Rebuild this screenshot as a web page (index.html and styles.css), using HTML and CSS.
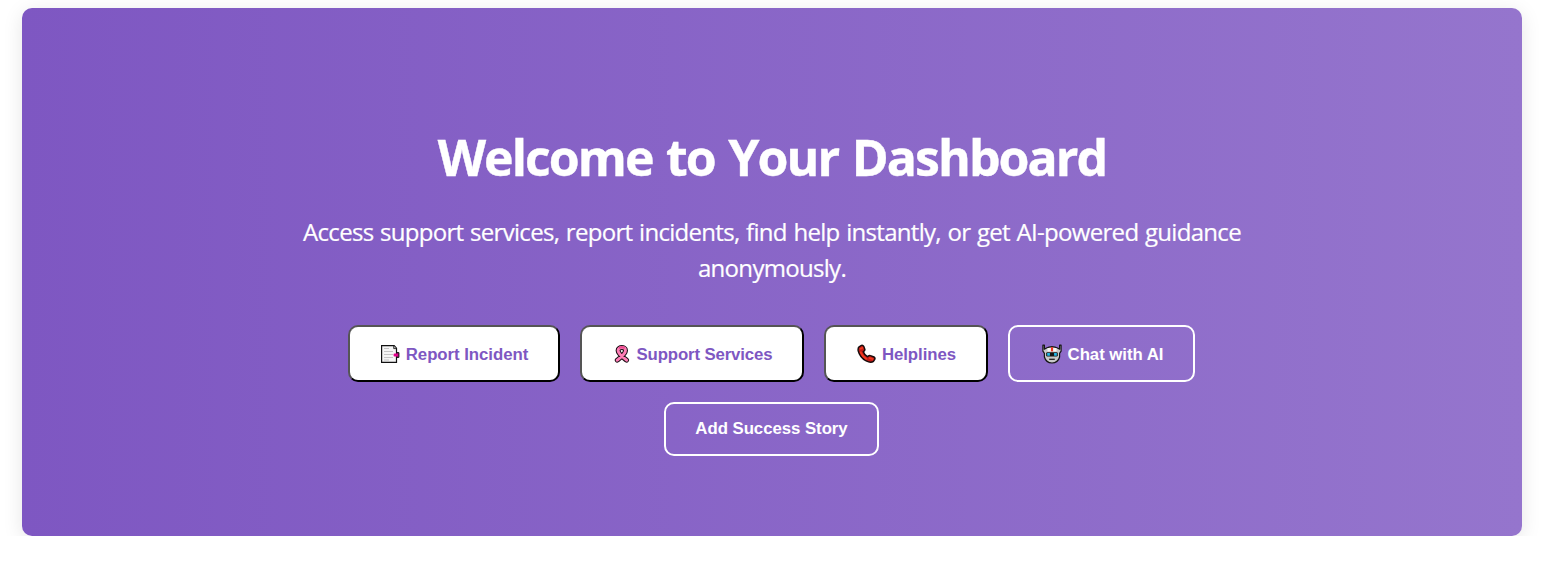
FILE: index.html
```html
<!DOCTYPE html>
<html lang="en">
<head>
<meta charset="utf-8">
<title>Dashboard</title>
<link rel="stylesheet" href="styles.css">
</head>
<body>
<section class="hero">
  <h1 class="title">Welcome to Your Dashboard</h1>
  <p class="lead">Access support services, report incidents, find help instantly, or get AI-powered guidance<br>anonymously.</p>
  <div class="actions">
    <button class="btn solid report">
      <svg class="icon" viewBox="0 0 20 20"><path d="M1.6 1.6H14.2l2.3 2.6V18.4H1.6Z" fill="#f5f5f5" stroke="#111" stroke-width="1.2"/><path d="M13.7 2v2.6h2.7" fill="#bbb" stroke="#111" stroke-width=".8"/><path d="M4 4.5h5M4 7.5h9M4 10.5h9M4 13.5h9M4 16h5" stroke="#c4c4c4" stroke-width="1"/><path d="M16.8 8.6h2.1v4.8h-2.1Z" fill="#b30070" stroke="#111" stroke-width="1"/><rect x="13.6" y="9.6" width="4.4" height="2.8" rx=".9" fill="#e3008c"/></svg>
      <span>Report Incident</span>
    </button>
    <button class="btn solid support">
      <svg class="icon" viewBox="-.5 0 20 20"><path d="M5.7 16.2C8 14.2 14 10 14 6.4 14 2.6 6.6 2.6 6.6 6.4c0 3.6 6.2 7.8 8.5 9.8" fill="none" stroke="#1b1015" stroke-width="5" stroke-linecap="round"/><path d="M5.7 16.2C8 14.2 14 10 14 6.4 14 2.6 6.6 2.6 6.6 6.4c0 3.6 6.2 7.8 8.5 9.8" fill="none" stroke="#ff7eb6" stroke-width="2.9" stroke-linecap="round"/><path d="M7.4 4.2C9 3 11.6 3 13.2 4.2" fill="none" stroke="#ed4c91" stroke-width="2"/></svg>
      <span>Support Services</span>
    </button>
    <button class="btn solid help">
      <svg class="icon" viewBox="-1 0 20 20"><path d="M2.1 2.8 4.4 1.4Q5.9 .9 6.7 2.4L7.8 5.2Q8.1 6.3 7 7.1L6.3 7.8Q7.3 10.8 10.4 12.7L11.6 11.8Q12.5 11.2 13.4 11.6L17 13Q18.4 13.8 17.7 15.4L16.5 17.3Q13.8 19.3 9.2 16.9 2.9 13.4 1.2 6.7 .8 3.9 2.1 2.8Z" fill="#c51b16" stroke="#160b0b" stroke-width="1.5"/><path d="M3.1 5 6.2 3.4M3.3 7.6Q5.1 12.3 9.6 15.3M12.2 13.9l4 1.4" fill="none" stroke="#f03a20" stroke-width="1.7"/></svg>
      <span>Helplines</span>
    </button>
    <button class="btn outline chat">
      <svg class="icon" viewBox="0 0 20 20"><path d="M.9 1.2H2.4V5.2L4 4.2Q10 1 16 4.2L17.6 5.2V1.2H19.1V7.2L17.6 9.3V13Q16 18.8 10 19 4 18.8 2.4 13V9.3L.9 7.2Z" fill="#c9c9c9" stroke="#151515" stroke-width="1.2" stroke-linejoin="round"/><path d="M5.5 4h9v3.4h-9Z" fill="#f6f6f6"/><path d="M8.9 3.2h2.2V7.4H8.9Z" fill="#ee3824"/><rect x="4.2" y="8.2" width="11.6" height="4.3" rx="1.2" fill="#151515"/><path d="M5.2 9h2.7v2.7H5.2ZM12.1 9h2.7v2.7h-2.7Z" fill="#22b9e8"/><path d="M7.2 15.3h5.6" stroke="#222" stroke-width="1.3"/></svg>
      <span>Chat with AI</span>
    </button>
    <button class="btn outline story"><span>Add Success Story</span></button>
  </div>
</section>
</body>
</html>
```
FILE: styles.css
```css
* { box-sizing: border-box; }
body { margin: 0; background: #fff; font-family: "Open Sans", "Noto Sans", sans-serif; }
.hero {
  width: 1500px;
  height: 528px;
  margin: 8px 0 0 22px;
  padding-top: 112px;
  border-radius: 10px;
  background: linear-gradient(90deg, #7e57c2, #9575cd);
  box-shadow: 0 4px 20px rgba(0, 0, 0, .1);
  color: #fff;
  text-align: center;
}
.title {
  margin: 0;
  font-size: 50px;
  line-height: 75px;
  font-weight: 700;
  letter-spacing: -1.95px;
  word-spacing: 2.5px;
  -webkit-text-stroke: .4px #fff;
  white-space: nowrap;
}
.lead {
  margin: 19px 0 0;
  font-size: 24px;
  line-height: 36px;
  letter-spacing: -.7px;
  word-spacing: 1.1px;
  -webkit-text-stroke: .2px #fff;
  white-space: nowrap;
}
.actions {
  display: flex;
  flex-wrap: wrap;
  justify-content: center;
  gap: 20px;
  width: 1000px;
  margin: 39px 0 0 249px;
}
.btn {
  display: flex;
  align-items: center;
  justify-content: center;
  gap: 6px;
  height: 57px;
  padding: 2px 0 0 1px;
  border: 2px solid #fff;
  border-radius: 10px;
  font: 700 16.8px/20px "Liberation Sans", Arial, sans-serif;
  letter-spacing: -.04px;
  white-space: nowrap;
}
.solid { background: #fff; border-color: #555 #000 #000 #555; color: #7e57c2; }
.outline { background: transparent; color: #fff; }
.icon { width: 20px; height: 20px; flex: none; margin-top: -1px; }
.report { width: 212px; }
.support { width: 224px; padding-left: 0; letter-spacing: -.13px; }
.help { width: 164px; }
.chat { width: 187px; padding-left: 3px; }
.story { width: 215px; height: 54px; padding-top: 0; }
```
